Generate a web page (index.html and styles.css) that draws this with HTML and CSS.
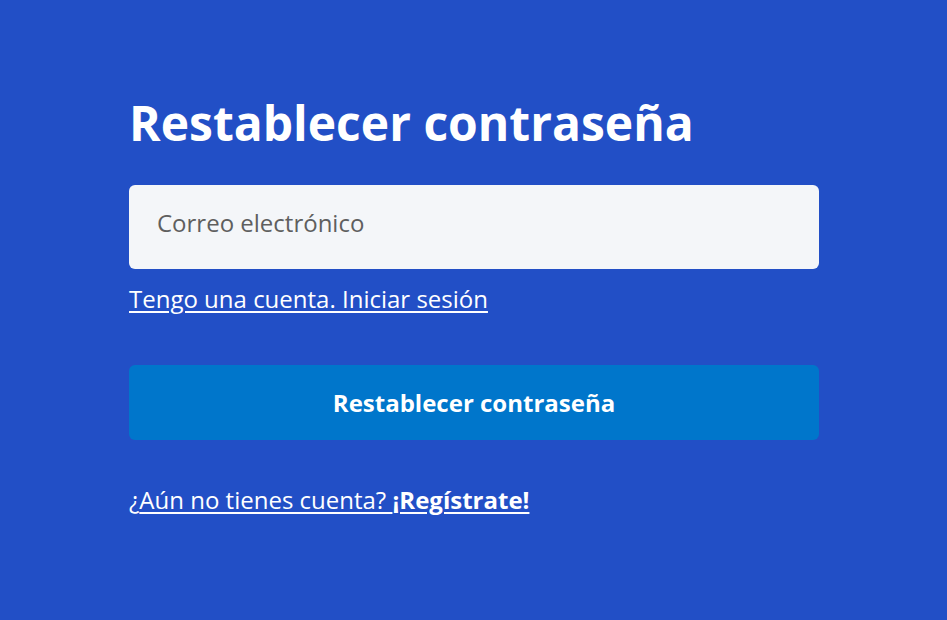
FILE: index.html
```html
<!DOCTYPE html>
<html lang="es">
<head>
<meta charset="utf-8">
<title>Restablecer contraseña</title>
<link rel="stylesheet" href="styles.css">
</head>
<body>
<main class="page">
  <form class="form">
    <h1 class="title">Restablecer contraseña</h1>
    <input class="field" type="email" placeholder="Correo electrónico">
    <a class="link login" href="#">Tengo una cuenta. Iniciar sesión</a>
    <button class="btn" type="button">Restablecer contraseña</button>
    <p class="signup">¿<a class="link" href="#">Aún no tienes cuenta? <strong>¡Regístrate!</strong></a></p>
  </form>
</main>
</body>
</html>
```
FILE: styles.css
```css
* { box-sizing: border-box; }
html, body {
  margin: 0;
  height: 100%;
  background: #224fc6;
}
body {
  font-family: "Open Sans", "Noto Sans", sans-serif;
  color: #fff;
}
.page {
  padding: 94px 128px 0 129px;
}
.form {
  width: 690px;
  display: flex;
  flex-direction: column;
  align-items: flex-start;
}
.title {
  margin: 0;
  font-size: 48px;
  font-weight: 700;
  line-height: 57.6px;
}
.field {
  margin-top: 33px;
  width: 100%;
  height: 84px;
  border: none;
  border-radius: 6px;
  background: #f4f6f9;
  padding: 0 28px 8px;
  font-family: inherit;
  font-size: 24px;
  color: #333;
  outline: none;
}
.field::placeholder { color: #5f5f5f; }
.link {
  color: #fff;
  text-decoration: underline;
  text-underline-offset: 3px;
  text-decoration-thickness: 1.5px;
}
.login {
  margin-top: 14px;
  font-size: 24px;
  line-height: 32px;
}
.btn {
  margin-top: 50px;
  width: 100%;
  height: 75px;
  border: none;
  border-radius: 6px;
  background: #0076cb;
  color: #fff;
  font-family: inherit;
  font-size: 24px;
  font-weight: 700;
}
.signup {
  margin: 44px 0 0;
  font-size: 24px;
  line-height: 32px;
}
.signup strong { font-weight: 700; }
```
